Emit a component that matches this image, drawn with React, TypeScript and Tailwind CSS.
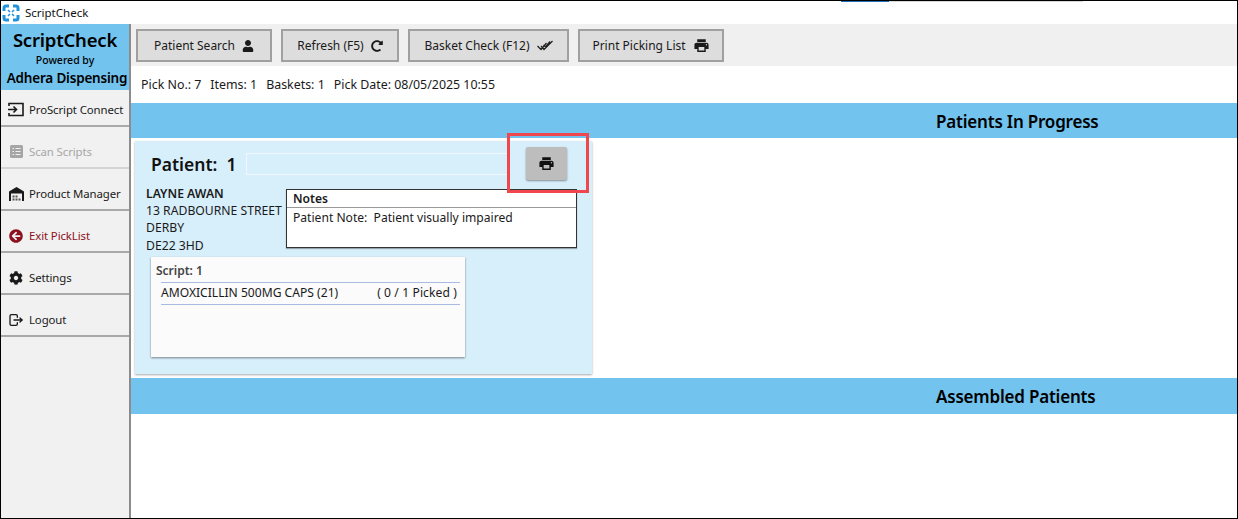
import React from 'react';
import { FaArrowCircleLeft, FaCog, FaRedoAlt, FaUser } from 'react-icons/fa';
import { MdPrint } from 'react-icons/md';
import { TbLogout } from 'react-icons/tb';

const font = { fontFamily: '"Noto Sans", sans-serif' };

function NavItem({ label, icon, tone = 'text-[#1a1a1a] border-[#a9a9a9]' }: { label: string; icon: React.ReactNode; tone?: string }) {
  return (
    <div className={`h-[42px] flex items-center pt-[9px] pl-[7px] gap-[5px] border-b-2 text-[11.4px] tracking-[-0.1px] ${tone}`}>
      <span className="w-[16px] flex justify-center">{icon}</span>
      <span>{label}</span>
    </div>
  );
}

function ToolButton({ label, icon, width }: { label: string; icon: React.ReactNode; width: string }) {
  return (
    <div className={`${width} h-[33px] flex items-center justify-center gap-[7px] pt-[1px] bg-[#dddddd] border-2 border-[#a0a0a0] text-[12px] text-[#1a1a1a]`}>
      <span>{label}</span>
      {icon}
    </div>
  );
}

function SectionBar({ title, height }: { title: string; height: string }) {
  return (
    <div className={`${height} bg-[#72c3ee] pl-[805px] pt-[2px] flex items-center text-[17px] font-semibold text-black tracking-[-0.2px]`}>
      {title}
    </div>
  );
}

function Logo() {
  return (
    <svg width="18" height="18" viewBox="0 0 18 18" fill="none" stroke="#1f93dc" strokeWidth="3">
      <path d="M2 7V4a2 2 0 0 1 2-2h3M11 2h3a2 2 0 0 1 2 2v3M16 11v3a2 2 0 0 1-2 2h-3M7 16H4a2 2 0 0 1-2-2v-3" />
      <path d="M6 6l2 2M12 6l-2 2M12 12l-2-2M6 12l2-2" strokeWidth="1.6" />
    </svg>
  );
}

function ConnectIcon() {
  return (
    <svg width="16" height="15" viewBox="0 0 16 15" fill="none" stroke="#1a1a1a" strokeWidth="1.6">
      <path d="M1 4V1.5h14v12H1V11" />
      <path d="M0 7.5h8M5.5 4.5l3 3-3 3" />
    </svg>
  );
}

function ScanIcon() {
  return (
    <svg width="13" height="13" viewBox="0 0 13 13">
      <rect width="13" height="13" rx="1.5" fill="#a6a6a6" />
      <path d="M2.5 3.5h1.5M2.5 6.5h1.5M2.5 9.5h1.5M5.5 3.5h5M5.5 6.5h5M5.5 9.5h5" stroke="#f1f1f1" strokeWidth="1.2" />
    </svg>
  );
}

function WarehouseIcon() {
  return (
    <svg width="15" height="14" viewBox="0 0 15 14">
      <path d="M0 14V4.5L7.5 0 15 4.5V14h-2V6.5H2V14z" fill="#1a1a1a" />
      <path d="M3.5 8.5h2v2h-2zM6.5 8.5h2v2h-2zM3.5 11.5h2v2h-2zM6.5 11.5h2v2h-2zM9.5 11.5h2v2h-2z" fill="#555" />
    </svg>
  );
}

function DoubleCheck() {
  return (
    <svg width="16" height="11" viewBox="0 0 16 11" fill="none" stroke="#222" strokeWidth="1.3">
      <path d="M0.5 6l3.5 3.5L9.5 3M4 6l3 3.5L15.5 1M6.5 5l2 2L13 1.5" />
    </svg>
  );
}

export default function App() {
  return (
    <div className="w-[1238px] h-[519px] bg-white border border-black overflow-hidden flex flex-col relative" style={font}>
      <div className="h-[23px] flex items-center pl-[1px] gap-[5px] text-[11.5px] text-[#111]">
        <Logo />
        <span>ScriptCheck</span>
      </div>
      <div className="flex-1 flex min-h-0">
        <aside className="w-[130px] bg-[#f1f1f1] border-r-2 border-[#8c8c8c] shrink-0">
          <div className="h-[66px] bg-[#72c3ee] flex flex-col items-center text-black">
            <div className="text-[18.5px] leading-[22px] mt-[5px] font-semibold tracking-[-0.2px]">ScriptCheck</div>
            <div className="text-[10.5px] leading-[14px] mt-[2px] font-medium">Powered by</div>
            <div className="text-[13.5px] leading-[20px] mt-[1px] ml-[4px] font-semibold tracking-[-0.2px] whitespace-nowrap">Adhera Dispensing</div>
          </div>
          <div className="h-[37px] flex items-center pt-[4px] pl-[7px] gap-[5px] border-b-2 border-[#a9a9a9] text-[11.4px] tracking-[-0.1px] text-[#1a1a1a]">
            <span className="w-[16px] flex justify-center"><ConnectIcon /></span>
            <span>ProScript Connect</span>
          </div>
          <NavItem label="Scan Scripts" tone="text-[#a6a6a6] border-[#d4d4d4]" icon={<ScanIcon />} />
          <NavItem label="Product Manager" icon={<WarehouseIcon />} />
          <NavItem label="Exit PickList" tone="text-[#8b1020] border-[#a9a9a9]" icon={<FaArrowCircleLeft size={14} />} />
          <NavItem label="Settings" icon={<FaCog size={14} />} />
          <NavItem label="Logout" icon={<TbLogout size={16} />} />
        </aside>
        <main className="flex-1 flex flex-col min-w-0">
          <div className="h-[42px] bg-[#f0f0f0] flex items-center pl-[5px] gap-[9px]">
            <ToolButton label="Patient Search" width="w-[136px]" icon={<FaUser size={12} />} />
            <ToolButton label="Refresh (F5)" width="w-[118px]" icon={<FaRedoAlt size={12} />} />
            <ToolButton label="Basket Check (F12)" width="w-[161px]" icon={<DoubleCheck />} />
            <ToolButton label="Print Picking List" width="w-[146px]" icon={<MdPrint size={17} />} />
          </div>
          <div className="h-[37px] flex items-center pl-[10px] pt-[1px] gap-[9px] text-[12.4px] text-[#1a1a1a]">
            <span>Pick No.: 7</span>
            <span>Items: 1</span>
            <span>Baskets: 1</span>
            <span>Pick Date: 08/05/2025 10:55</span>
          </div>
          <SectionBar title="Patients In Progress" height="h-[35px]" />
          <div className="h-[240px] pt-[3px] pl-[4px]">
            <div className="w-[457px] h-[233px] bg-[#d7eefb] shadow-[0_1px_2px_rgba(0,0,0,0.35)] pt-[9px] pl-[11px]">
              <div className="flex items-center h-[29px]">
                <span className="w-[100px] pl-[5px] text-[17.5px] font-semibold text-[#111] whitespace-pre -mt-[1px]">Patient:  1</span>
                <div className="w-[262px] h-[22px] border border-[#eef8fe] -mt-[2px]" />
                <div className="w-[41px] h-[33px] bg-[#bdbdbd] rounded-[2px] shadow-[0_1px_2px_rgba(0,0,0,0.4)] flex items-center justify-center text-[#111] ml-[18px] -mt-[2px]">
                  <MdPrint size={17} />
                </div>
              </div>
              <div className="flex mt-[5px]">
                <div className="w-[140px] text-[12.2px] leading-[17.7px] text-[#1a1a1a] whitespace-nowrap">
                  <div className="font-semibold pt-[1px] -mb-[1px]">LAYNE AWAN</div>
                  <div>13 RADBOURNE STREET</div>
                  <div>DERBY</div>
                  <div>DE22 3HD</div>
                </div>
                <div className="w-[291px] h-[59px] mt-[5px] bg-white border border-[#333] shadow-[0_1px_1px_rgba(0,0,0,0.3)] text-[12.1px] text-[#1a1a1a]">
                  <div className="h-[18px] leading-[17px] pl-[6px] font-semibold border-b border-[#999]">Notes</div>
                  <div className="pl-[6px] leading-[19px] whitespace-pre">Patient Note:  Patient visually impaired</div>
                </div>
              </div>
              <div className="w-[314px] h-[100px] bg-[#fbfbfb] shadow-[0_1px_2px_rgba(0,0,0,0.45)] ml-[5px] mt-[2px] text-[12.1px]">
                <div className="h-[25px] pl-[5px] pt-[3px] flex items-center font-semibold text-[#444] text-[12px]">Script: 1</div>
                <div className="ml-[10px] mr-[5px] h-[23px] border-y border-[#a9bbe0] flex items-center justify-between pr-[3px] text-[#1a1a1a]">
                  <span>AMOXICILLIN 500MG CAPS (21)</span>
                  <span className="tracking-[0.1px]">( 0 / 1 Picked )</span>
                </div>
              </div>
            </div>
          </div>
          <SectionBar title="Assembled Patients" height="h-[36px]" />
        </main>
      </div>
      <div className="absolute left-[506px] top-[132px] w-[82px] h-[60px] border-[3px] border-[#f0474f]" />
      <div className="absolute left-[840px] top-0 w-[48px] h-[1px] bg-[#1f6fb5]" />
      <div className="absolute left-[888px] top-0 w-[194px] h-[1px] bg-[#d8d8d8]" />
    </div>
  );
}
